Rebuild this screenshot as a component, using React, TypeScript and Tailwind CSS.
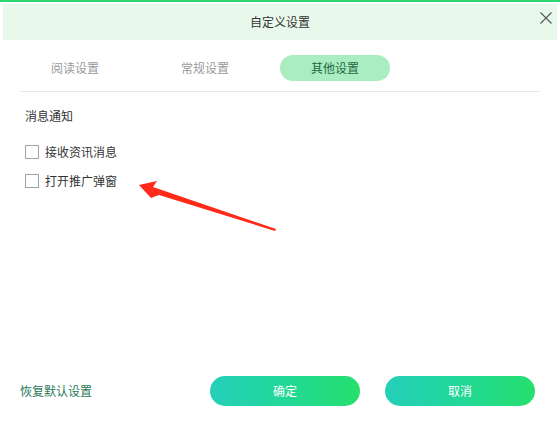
import React from "react";

const font = { fontFamily: '"Noto Sans CJK SC", "Noto Sans", sans-serif' };

function Checkbox({ label }: { label: string }) {
  return (
    <label className="flex items-center h-[16px] cursor-pointer">
      <span className="w-[14px] h-[14px] border border-[#a3a3a3] bg-white" />
      <span className="ml-[6px] text-[12px] leading-[16px] text-[#333]">{label}</span>
    </label>
  );
}

export default function App() {
  const tabs = ["阅读设置", "常规设置", "其他设置"];
  return (
    <div className="relative w-[560px] h-[426px] bg-white flex flex-col overflow-hidden" style={font}>
      <div className="h-[2px] bg-[#2bd56f]" />
      <div className="relative mt-[2px] mx-[3px] h-[36px] bg-[#e8f9ec] flex items-center justify-center">
        <span className="text-[12px] leading-[16px] text-[#333]">自定义设置</span>
        <button className="absolute right-[5px] top-[8px] w-[12px] h-[12px]">
          <svg viewBox="0 0 12 12" width="12" height="12">
            <path d="M0.5 0.5L11.5 11.5M11.5 0.5L0.5 11.5" stroke="#555" strokeWidth="1.1" fill="none" />
          </svg>
        </button>
      </div>

      <div className="mt-[15px] px-[20px] flex gap-[20px]">
        {tabs.map((t, i) => (
          <div
            key={t}
            className={
              i === 2
                ? "w-[110px] h-[26px] rounded-full bg-[#a9edc1] flex items-center justify-center text-[12px] text-[#1d6a42]"
                : "w-[110px] h-[26px] rounded-full flex items-center justify-center text-[12px] text-[#9a9a9a]"
            }
          >
            {t}
          </div>
        ))}
      </div>

      <div className="mt-[10px] mx-[20px] h-px bg-[#e6e6e6]" />

      <div className="px-[25px] pt-[16px] flex flex-col">
        <div className="text-[12px] leading-[16px] text-[#333]">消息通知</div>
        <div className="mt-[20px] flex flex-col gap-[13px]">
          <Checkbox label="接收资讯消息" />
          <Checkbox label="打开推广弹窗" />
        </div>
      </div>

      <div className="flex-1" />

      <div className="flex items-center pl-[20px] pr-[25px] pb-[20px]">
        <span className="text-[12px] leading-[16px] text-[#2a7a58]">恢复默认设置</span>
        <div className="ml-auto flex gap-[25px]">
          <button className="w-[150px] h-[30px] rounded-full bg-linear-to-r from-[#25cfba] to-[#26df6c] text-white text-[12px]">
            确定
          </button>
          <button className="w-[150px] h-[30px] rounded-full bg-linear-to-r from-[#25cfba] to-[#26df6c] text-white text-[12px]">
            取消
          </button>
        </div>
      </div>

      <svg className="absolute left-0 top-0 pointer-events-none" width="560" height="426" viewBox="0 0 560 426">
        <polygon
          points="139,185 157,181 153,187 276,229 275,231 159,195 151,198"
          fill="#ff2a1a"
        />
      </svg>
    </div>
  );
}
